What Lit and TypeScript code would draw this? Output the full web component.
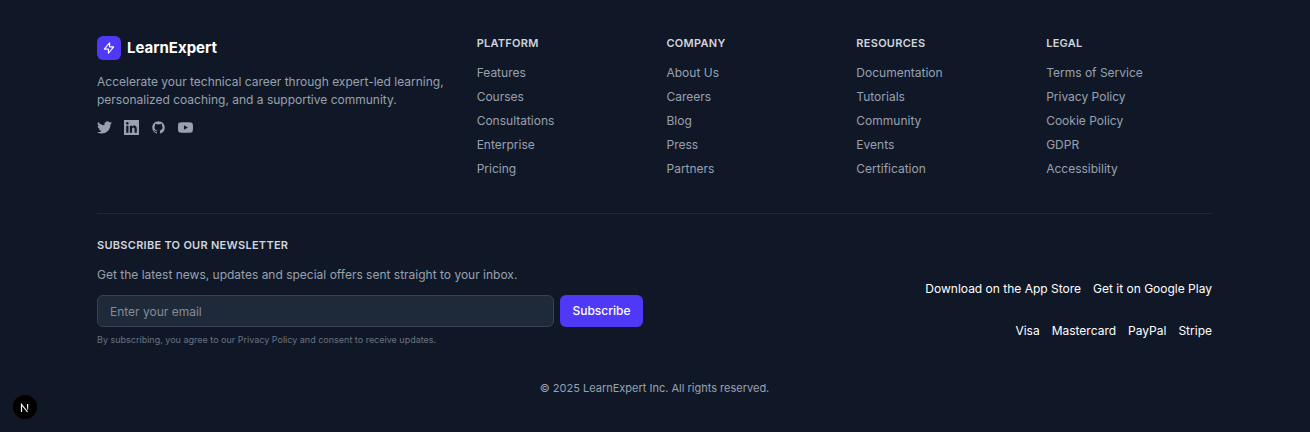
import { LitElement, html, css, svg } from "lit";
import { customElement } from "lit/decorators.js";

interface Column {
  title: string;
  links: string[];
}

const COLUMNS: Column[] = [
  { title: "Platform", links: ["Features", "Courses", "Consultations", "Enterprise", "Pricing"] },
  { title: "Company", links: ["About Us", "Careers", "Blog", "Press", "Partners"] },
  { title: "Resources", links: ["Documentation", "Tutorials", "Community", "Events", "Certification"] },
  { title: "Legal", links: ["Terms of Service", "Privacy Policy", "Cookie Policy", "GDPR", "Accessibility"] },
];

const SOCIALS = [
  {
    name: "Twitter",
    path: svg`<path d="M23.953 4.57a10 10 0 01-2.825.775 4.958 4.958 0 002.163-2.723c-.951.555-2.005.959-3.127 1.184a4.92 4.92 0 00-8.384 4.482C7.69 8.095 4.067 6.13 1.64 3.162a4.822 4.822 0 00-.666 2.475c0 1.71.87 3.213 2.188 4.096a4.904 4.904 0 01-2.228-.616v.06a4.923 4.923 0 003.946 4.827 4.996 4.996 0 01-2.212.085 4.936 4.936 0 004.604 3.417 9.867 9.867 0 01-6.102 2.105c-.39 0-.779-.023-1.17-.067a13.995 13.995 0 007.557 2.209c9.053 0 13.998-7.496 13.998-13.985 0-.21 0-.42-.015-.63A9.935 9.935 0 0024 4.59z"/>`,
  },
  {
    name: "LinkedIn",
    path: svg`<path fill-rule="evenodd" d="M0 0h24v24H0zM20.447 20.452v-5.569c0-3.037-.85-5.933-4.176-5.933-1.6 0-2.7.9-3.2 1.711h-.046V9H9.351v11.452h3.556v-5.659c0-1.494.283-2.939 2.134-2.939 1.824 0 1.852 1.706 1.852 3.037v5.561zM5.337 7.433a2.062 2.062 0 1 0 0-4.126 2.062 2.062 0 0 0 0 4.126zM3.555 20.452h3.564V9H3.555z"/>`,
  },
  {
    name: "GitHub",
    path: svg`<path fill-rule="evenodd" d="M12 2C6.477 2 2 6.484 2 12.017c0 4.425 2.865 8.18 6.839 9.504.5.092.682-.217.682-.483 0-.237-.008-.868-.013-1.703-2.782.605-3.369-1.343-3.369-1.343-.454-1.158-1.11-1.466-1.11-1.466-.908-.62.069-.608.069-.608 1.003.07 1.531 1.032 1.531 1.032.892 1.53 2.341 1.088 2.91.832.092-.647.35-1.088.636-1.338-2.22-.253-4.555-1.113-4.555-4.951 0-1.093.39-1.988 1.029-2.688-.103-.253-.446-1.272.098-2.65 0 0 .84-.27 2.75 1.026A9.564 9.564 0 0112 6.844c.85.004 1.705.115 2.504.337 1.909-1.296 2.747-1.027 2.747-1.027.546 1.379.202 2.398.1 2.651.64.7 1.028 1.595 1.028 2.688 0 3.848-2.339 4.695-4.566 4.943.359.309.678.92.678 1.855 0 1.338-.012 2.419-.012 2.747 0 .268.18.58.688.482A10.019 10.019 0 0022 12.017C22 6.484 17.522 2 12 2z"/>`,
  },
  {
    name: "YouTube",
    path: svg`<path d="M23.498 6.186a3.016 3.016 0 0 0-2.122-2.136C19.505 3.545 12 3.545 12 3.545s-7.505 0-9.377.505A3.017 3.017 0 0 0 .502 6.186C0 8.07 0 12 0 12s0 3.93.502 5.814a3.016 3.016 0 0 0 2.122 2.136c1.871.505 9.376.505 9.376.505s7.505 0 9.377-.505a3.015 3.015 0 0 0 2.122-2.136C24 15.93 24 12 24 12s0-3.93-.502-5.814zM9.545 15.568V8.432L15.818 12l-6.273 3.568z"/>`,
  },
];

const STORES = ["Download on the App Store", "Get it on Google Play"];
const PAYMENTS = ["Visa", "Mastercard", "PayPal", "Stripe"];

@customElement("app-root")
export class AppRoot extends LitElement {
  static styles = css`
    :host {
      display: block;
      min-height: 100vh;
      background: #101828;
      color: #99a1af;
      font-family: Inter, "Liberation Sans", sans-serif;
      font-size: 12px;
      line-height: 18px;
    }
    *,
    *::before {
      box-sizing: border-box;
    }
    a {
      color: inherit;
      text-decoration: none;
    }
    a:hover {
      color: #fff;
    }
    h2,
    p,
    ul {
      margin: 0;
      padding: 0;
      list-style: none;
    }
    .footer {
      max-width: 1164px;
      margin: 0 auto;
      padding: 36px 25px 36px 24px;
    }
    .top {
      display: grid;
      grid-template-columns: repeat(6, minmax(0, 1fr));
      gap: 24px;
      padding-bottom: 35px;
      border-bottom: 1px solid #1e2939;
    }
    .brand {
      grid-column: span 2;
    }
    .logo {
      display: flex;
      align-items: center;
      gap: 6px;
      color: #fff;
      font-size: 15px;
      font-weight: 700;
      line-height: 24px;
    }
    .mark {
      display: grid;
      place-items: center;
      width: 24px;
      height: 24px;
      border-radius: 6px;
      background: #4f39f6;
    }
    .mark svg {
      width: 14px;
      height: 14px;
      fill: none;
      stroke: #fff;
      stroke-width: 2;
      stroke-linecap: round;
      stroke-linejoin: round;
    }
    .about {
      margin-top: 13px;
    }
    .socials {
      display: flex;
      gap: 12px;
      margin-top: 11px;
    }
    .socials svg {
      display: block;
      width: 15px;
      height: 15px;
      fill: currentColor;
    }
    .title {
      color: #d1d5dc;
      font-size: 11px;
      font-weight: 600;
      line-height: 15px;
      letter-spacing: 0.025em;
      text-transform: uppercase;
    }
    .links {
      display: grid;
      gap: 6px;
      margin-top: 13px;
    }
    .bottom {
      display: grid;
      grid-template-columns: repeat(2, minmax(0, 1fr));
      gap: 24px;
      align-items: end;
      margin-top: 24px;
    }
    .lead {
      margin-top: 13px;
    }
    .form {
      display: flex;
      gap: 6px;
      margin-top: 11px;
    }
    .email {
      flex: 1;
      min-width: 0;
      height: 32px;
      padding: 0 12px;
      border: 1px solid #364153;
      border-radius: 6px;
      background: #1e2939;
      color: #fff;
      font: inherit;
    }
    .email::placeholder {
      color: #858c96;
      opacity: 1;
    }
    .submit {
      height: 32px;
      padding: 0 12px;
      border: 0;
      border-radius: 6px;
      background: #4f39f6;
      color: #fff;
      font: inherit;
      font-weight: 500;
      cursor: pointer;
    }
    .note {
      margin-top: 6px;
      color: #6a7282;
      font-size: 9px;
      line-height: 14px;
    }
    .extras {
      display: grid;
      gap: 24px;
      justify-items: end;
      padding-bottom: 7px;
      color: #fff;
    }
    .row {
      display: flex;
      flex-wrap: wrap;
      gap: 12px;
    }
    .copyright {
      margin-top: 32px;
      font-size: 11px;
      text-align: center;
    }
    .badge {
      position: fixed;
      left: 13px;
      bottom: 13px;
      display: grid;
      place-items: center;
      width: 24px;
      height: 24px;
      padding: 0;
      border: 0;
      border-radius: 50%;
      background: #000;
      box-shadow: 0 0 0 1px #171717;
    }
    .badge svg {
      width: 24px;
      height: 24px;
      fill: none;
      stroke-width: 1.2;
    }
  `;

  render() {
    return html`
      <footer class="footer">
        <div class="top">
          <div class="brand">
            <a class="logo" href="#">
              <span class="mark">
                <svg viewBox="0 0 24 24" aria-hidden="true"><path d="M13 10V3L4 14h7v7l9-11h-7z" /></svg>
              </span>
              LearnExpert
            </a>
            <p class="about">
              Accelerate your technical career through expert-led learning, personalized coaching, and a supportive
              community.
            </p>
            <div class="socials">
              ${SOCIALS.map(
                (s) => html`<a href="#" aria-label=${s.name}><svg viewBox="0 0 24 24" aria-hidden="true">${s.path}</svg></a>`
              )}
            </div>
          </div>
          ${COLUMNS.map(
            (c) => html`
              <nav aria-label=${c.title}>
                <h2 class="title">${c.title}</h2>
                <ul class="links">
                  ${c.links.map((l) => html`<li><a href="#">${l}</a></li>`)}
                </ul>
              </nav>
            `
          )}
        </div>
        <div class="bottom">
          <div>
            <h2 class="title">Subscribe to our newsletter</h2>
            <p class="lead">Get the latest news, updates and special offers sent straight to your inbox.</p>
            <form class="form" @submit=${(e: Event) => e.preventDefault()}>
              <input class="email" type="email" aria-label="Email address" placeholder="Enter your email" />
              <button class="submit" type="submit">Subscribe</button>
            </form>
            <p class="note">By subscribing, you agree to our Privacy Policy and consent to receive updates.</p>
          </div>
          <div class="extras">
            <div class="row">${STORES.map((s) => html`<a href="#">${s}</a>`)}</div>
            <div class="row">${PAYMENTS.map((p) => html`<span>${p}</span>`)}</div>
          </div>
        </div>
        <p class="copyright">© 2025 LearnExpert Inc. All rights reserved.</p>
      </footer>
      <button class="badge" type="button" aria-label="Open developer tools">
        <svg viewBox="0 0 24 24" aria-hidden="true">
          <defs>
            <linearGradient id="fade" gradientUnits="userSpaceOnUse" x1="0" y1="9" x2="0" y2="17">
              <stop offset="0.3" stop-color="#fff" />
              <stop offset="1" stop-color="#fff" stop-opacity="0.2" />
            </linearGradient>
          </defs>
          <path stroke="#fff" d="M8.5 17V9.5L14.5 17" />
          <path stroke="url(#fade)" d="M14.6 9V15" />
        </svg>
      </button>
    `;
  }
}
